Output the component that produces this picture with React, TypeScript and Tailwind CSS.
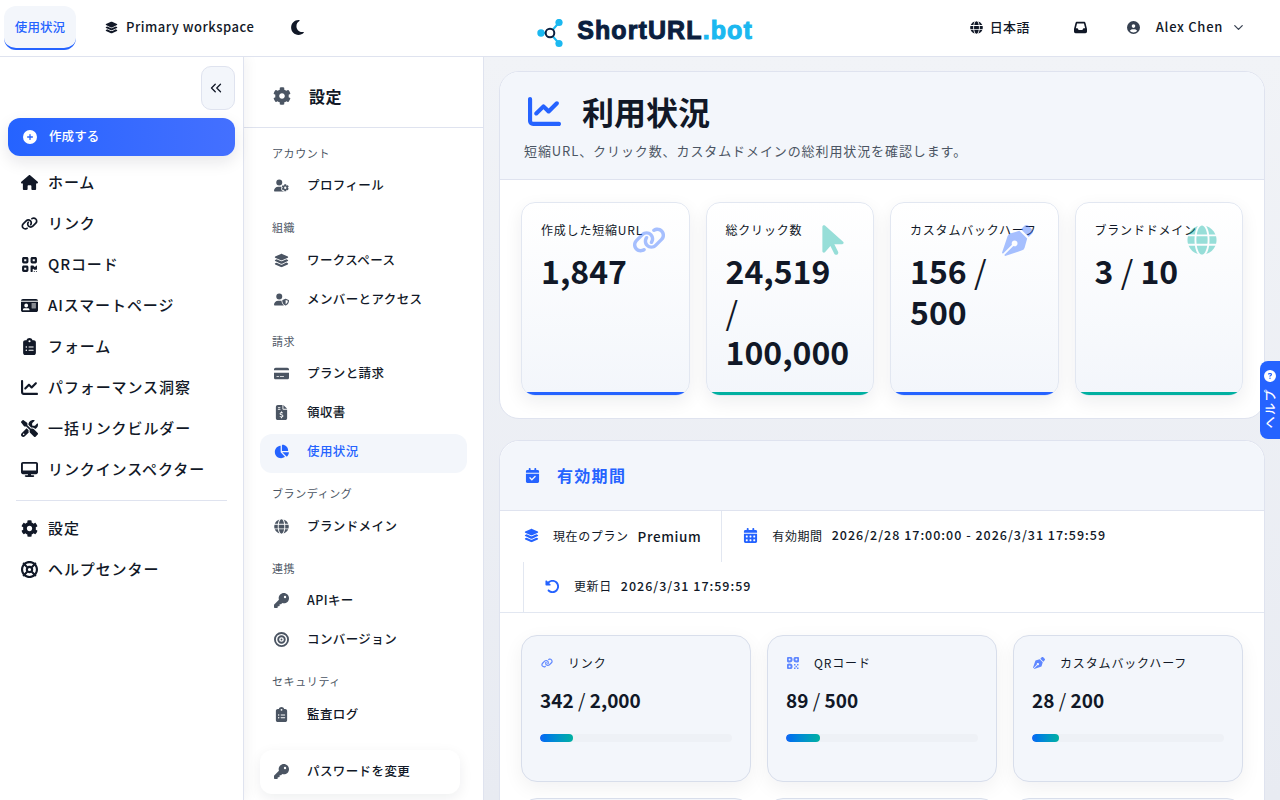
import type { ReactNode } from "react"
import { FaCog, FaGlobe, FaPenNib } from "react-icons/fa"
import {
  FaArrowPointer,
  FaCalendarCheck,
  FaCalendarDays,
  FaChartLine,
  FaChartPie,
  FaCircleQuestion,
  FaCirclePlus,
  FaCircleUser,
  FaClipboardList,
  FaCreditCard,
  FaDesktop,
  FaFileInvoiceDollar,
  FaHouse,
  FaIdCard,
  FaInbox,
  FaKey,
  FaLayerGroup,
  FaLifeRing,
  FaLink,
  FaMoon,
  FaBullseye,
  FaQrcode,
  FaRotateLeft,
  FaScrewdriverWrench,
  FaUserGear,
  FaUserShield,
} from "react-icons/fa6"
import { ChevronDown, ChevronsLeft } from "lucide-react"

const mainNav = [
  { label: "ホーム", icon: <FaHouse /> },
  { label: "リンク", icon: <FaLink /> },
  { label: "QRコード", icon: <FaQrcode /> },
  { label: "AIスマートページ", icon: <FaIdCard /> },
  { label: "フォーム", icon: <FaClipboardList /> },
  { label: "パフォーマンス洞察", icon: <FaChartLine /> },
  { label: "一括リンクビルダー", icon: <FaScrewdriverWrench /> },
  { label: "リンクインスペクター", icon: <FaDesktop /> },
]

const settingsNav = [
  { title: "アカウント", items: [{ label: "プロフィール", icon: <FaUserGear /> }] },
  {
    title: "組織",
    items: [
      { label: "ワークスペース", icon: <FaLayerGroup /> },
      { label: "メンバーとアクセス", icon: <FaUserShield /> },
    ],
  },
  {
    title: "請求",
    items: [
      { label: "プランと請求", icon: <FaCreditCard /> },
      { label: "領収書", icon: <FaFileInvoiceDollar /> },
      { label: "使用状況", icon: <FaChartPie />, active: true },
    ],
  },
  { title: "ブランディング", items: [{ label: "ブランドメイン", icon: <FaGlobe /> }] },
  {
    title: "連携",
    items: [
      { label: "APIキー", icon: <FaKey /> },
      { label: "コンバージョン", icon: <FaBullseye /> },
    ],
  },
  { title: "セキュリティ", items: [{ label: "監査ログ", icon: <FaClipboardList /> }] },
]

function QrDots() {
  return (
    <svg viewBox="0 0 12 12" className="w-3 h-3" fill="currentColor">
      <circle cx="2.6" cy="2.6" r="2" fill="none" stroke="currentColor" strokeWidth="2" />
      <circle cx="9.4" cy="2.6" r="2" fill="none" stroke="currentColor" strokeWidth="2" />
      <circle cx="2.6" cy="9.4" r="2" fill="none" stroke="currentColor" strokeWidth="2" />
      <rect x="7" y="7" width="1.5" height="1.5" />
      <rect x="10" y="7" width="1.5" height="1.5" />
      <rect x="8.5" y="8.8" width="1.5" height="1.5" />
      <rect x="7" y="10.5" width="1.5" height="1.5" />
      <rect x="10" y="10.5" width="1.5" height="1.5" />
    </svg>
  )
}

const stats = [
  { label: "作成した短縮URL", value: "1,847", icon: <FaLink className="text-[34px]" />, blue: true },
  { label: "総クリック数", value: "24,519 / 100,000", icon: <FaArrowPointer className="text-[34px]" />, blue: false },
  { label: "カスタムバックハーフ", value: "156 / 500", icon: <FaPenNib className="text-[31px]" />, blue: true },
  { label: "ブランドドメイン", value: "3 / 10", icon: <FaGlobe className="text-[30px]" />, blue: false },
]

const quotas: { label: string; value: string; pct: number; icon: ReactNode }[] = [
  { label: "リンク", value: "342 / 2,000", pct: 17.1, icon: <FaLink /> },
  { label: "QRコード", value: "89 / 500", pct: 17.8, icon: <QrDots /> },
  { label: "カスタムバックハーフ", value: "28 / 200", pct: 14, icon: <FaPenNib /> },
]

// the slash is much thinner than the digits around it
function Ratio({ value }: { value: string }) {
  const parts = value.split(" / ")
  if (parts.length === 1) return <>{value}</>
  return (
    <>
      {parts[0]} <span className="font-normal">/</span> {parts[1]}
    </>
  )
}

function Logo() {
  return (
    <div className="flex items-center gap-[10px] ml-[40px]">
      <svg viewBox="0 0 30 30" className="w-[30px] h-[30px] mt-[12px]">
        <path d="M13 14 L22 3.5 M13 14 L4 14 M13 14 L22 24.5" stroke="#1bb8f0" strokeWidth="2" />
        <circle cx="22" cy="3.5" r="3.6" fill="#1bb8f0" />
        <circle cx="4" cy="14" r="3.7" fill="#1bb8f0" />
        <circle cx="22" cy="24.5" r="3.6" fill="#1bb8f0" />
        <circle cx="13" cy="14" r="4.3" fill="#fff" stroke="#0b1f3f" strokeWidth="2" />
      </svg>
      <span className="mt-[6px] [font-family:'Liberation_Sans',sans-serif] text-[25px] font-bold tracking-[1.1px] text-[#0b1f3f] [-webkit-text-stroke:1px_currentColor]">
        ShortURL<span className="text-[#1bb8f0]">.bot</span>
      </span>
    </div>
  )
}

function Header() {
  return (
    <header className="h-[57px] shrink-0 flex items-center bg-white border-b border-[#dfe3ef] relative z-20">
      <div className="flex-1 flex items-center pl-1">
        <div className="w-[72px] h-[44px] flex items-center justify-center bg-[#f3f6fb] rounded-xl border-b-2 border-[#2563ff] text-[12.5px] tracking-[0.1px] font-medium text-[#2563ff]">
          使用状況
        </div>
        <div className="flex items-center gap-2 ml-[29px] pb-[2px] text-[13px] font-medium tracking-[0.5px] text-[#111827]">
          <FaLayerGroup className="text-[13px]" />
          Primary workspace
        </div>
        <FaMoon className="ml-[35px] mb-[2px] text-[17px] text-[#111827]" />
      </div>
      <Logo />
      <div className="flex-1 flex items-center justify-end pb-[2px] pr-[34px] text-[#111827]">
        <FaGlobe className="text-[13px]" />
        <span className="ml-[7px] text-[13px] font-medium tracking-[0.4px]">日本語</span>
        <FaInbox className="ml-[44px] text-[13px]" />
        <FaCircleUser className="ml-[40px] text-[13px] text-[#374151]" />
        <span className="ml-4 text-[13px] font-medium tracking-[0.7px]">Alex Chen</span>
        <ChevronDown className="ml-[8px] w-[15px] h-[15px] text-[#374151]" />
      </div>
    </header>
  )
}

function MainNavItem({ label, icon }: { label: string; icon: ReactNode }) {
  return (
    <div className="h-[41px] flex items-center pl-5 text-[15px] font-medium tracking-[0.9px] text-[#111827]">
      <span className="w-[18px] flex justify-center text-[17px] mr-[10px]">{icon}</span>
      {label}
    </div>
  )
}

function Sidebar() {
  return (
    <aside className="w-[244px] shrink-0 bg-white border-r border-[#dfe3ef] relative z-10 shadow-[3px_0_12px_rgba(17,24,39,0.05)] flex flex-col">
      <div className="flex justify-end pt-[9px] pr-2">
        <button className="w-[34px] h-[44px] flex items-center justify-center pr-1 bg-[#f3f6fb] border border-[#dfe3ef] rounded-[10px] text-[#111827]">
          <ChevronsLeft className="w-[18px] h-[18px]" strokeWidth={1.75} />
        </button>
      </div>
      <div className="mt-2 mx-2 h-[38px] w-[227px] flex items-center pl-[15px] pb-[1px] rounded-xl bg-gradient-to-r from-[#2563ff] to-[#4470ff] text-white text-[12.5px] font-medium tracking-[0.1px] shadow-[0_6px_16px_rgba(17,24,39,0.1)]">
        <FaCirclePlus className="text-[14px] mr-[12px]" />
        作成する
      </div>
      <nav className="mt-[6px]">
        {mainNav.map((item) => (
          <MainNavItem key={item.label} label={item.label} icon={item.icon} />
        ))}
      </nav>
      <div className="mx-4 mt-[10px] mb-[7px] h-px bg-[#dfe3ef]" />
      <MainNavItem label="設定" icon={<FaCog />} />
      <MainNavItem label="ヘルプセンター" icon={<FaLifeRing />} />
    </aside>
  )
}

function SettingsNav() {
  return (
    <aside className="w-[240px] shrink-0 bg-white border-r border-[#dfe3ef] flex flex-col">
      <div className="h-[71px] shrink-0 flex items-center pl-[29px] pt-2 border-b border-[#dfe3ef]">
        <FaCog className="text-[18px] text-[#4b5563] mr-[18px]" />
        <span className="text-[16px] font-semibold tracking-[0.4px] text-[#111827]">設定</span>
      </div>
      <div className="px-4 pt-[17px]">
        {settingsNav.map((group) => (
          <div key={group.title} className="mb-[13px]">
            <div className="h-4 mb-[6.5px] pl-3 flex items-center text-[11px] tracking-[0.6px] text-[#4b5563]">
              {group.title}
            </div>
            {group.items.map((item) => (
              <div
                key={item.label}
                className={
                  item.active
                    ? "h-[39px] flex items-center pl-[13px] pb-[3px] w-[207px] rounded-xl bg-[#f3f6fb] text-[#2563ff] text-[12.5px] font-medium tracking-[0.4px]"
                    : "h-[39px] flex items-center pl-[13px] pb-[3px] w-[207px] text-[#111827] text-[12.5px] font-medium tracking-[0.4px]"
                }
              >
                <span className={item.active ? "w-4 flex justify-center text-[15px] mr-[18px]" : "w-4 flex justify-center text-[15px] mr-[18px] text-[#4b5563]"}>
                  {item.icon}
                </span>
                {item.label}
              </div>
            ))}
          </div>
        ))}
        <div className="mt-[15px] w-[200px] h-[44px] flex items-center pl-[13px] pb-[2px] rounded-xl bg-white shadow-[0_4px_14px_rgba(17,24,39,0.07)] text-[#111827] text-[12.5px] font-medium tracking-[0.4px]">
          <span className="w-4 flex justify-center text-[15px] mr-[18px] text-[#4b5563]">
            <FaKey />
          </span>
          パスワードを変更
        </div>
      </div>
    </aside>
  )
}

function StatCard({ label, value, icon, blue }: { label: string; value: string; icon: ReactNode; blue: boolean }) {
  return (
    <div className="relative overflow-hidden h-[194px] rounded-[14px] border border-[#e2e7f1] bg-gradient-to-b from-white to-[#f3f6fb] pt-[18px] pl-[19px] pr-[40px] shadow-[0_6px_18px_rgba(17,24,39,0.07)]">
      <div className="text-[12px] tracking-[0.8px] text-[#111827] whitespace-nowrap">{label}</div>
      <div className="mt-[11px] text-[32px] leading-[40.5px] font-semibold text-[#111827]">
        <Ratio value={value} />
      </div>
      <div className={blue ? "absolute right-[20px] top-[21px] w-10 h-[32px] flex items-center justify-center text-[#2563ff] opacity-40" : "absolute right-[20px] top-[21px] w-10 h-[32px] flex items-center justify-center text-[#00b0a0] opacity-40"}>
        {icon}
      </div>
      <div className={blue ? "absolute left-0 right-0 bottom-0 h-[3px] bg-[#2563ff]" : "absolute left-0 right-0 bottom-0 h-[3px] bg-[#00b0a0]"} />
    </div>
  )
}

function QuotaCard({ label, value, pct, icon }: { label: string; value: string; pct: number; icon: ReactNode }) {
  return (
    <div className="h-[147px] rounded-2xl border border-[#d8deeb] bg-[#f3f6fb] pt-[18px] px-[18px] shadow-[0_6px_20px_rgba(17,24,39,0.06)]">
      <div className="flex items-center h-[18px] text-[12px] tracking-[0.85px] text-[#111827]">
        <span className="w-[14px] flex justify-center text-[12px] text-[#5f87ff] mr-[14px]">{icon}</span>
        {label}
      </div>
      <div className="mt-[14px] text-[19px] leading-7 font-semibold text-[#111827]">
        <Ratio value={value} />
      </div>
      <div className="mt-[20px] h-2 rounded-full bg-[#eef1f6] overflow-hidden">
        <div className="h-full rounded-full bg-gradient-to-r from-[#1565f5] to-[#00b0a0]" style={{ width: `${pct}%` }} />
      </div>
    </div>
  )
}

function Meta({ icon, label, value, className, valueClass }: { icon: ReactNode; label: string; value: string; className: string; valueClass: string }) {
  return (
    <div className={`h-[50.5px] flex items-center pb-[1px] ${className}`}>
      <span className="w-[16px] flex justify-center text-[15px] text-[#2563ff] mr-[14px]">{icon}</span>
      <span className="text-[12px] tracking-[0.6px] text-[#111827] mr-[9px]">{label}</span>
      <span className={valueClass}>{value}</span>
    </div>
  )
}

function Content() {
  return (
    <main className="flex-1 min-w-0 overflow-hidden bg-gradient-to-b from-[#f1f3f7] to-[#e8ebf2] pl-[15px] pr-[15px] pt-[14px]">
      <section className="rounded-[20px] border border-[#dfe3ef] bg-white overflow-hidden">
        <div className="h-[108px] bg-[#f3f6fb] border-b border-[#dfe3ef] pl-6 pt-[19px]">
          <div className="flex items-center gap-[21px] pl-[4px]">
            <FaChartLine className="text-[33px] text-[#2563ff]" />
            <h1 className="text-[32px] leading-10 font-bold text-[#111827]">利用状況</h1>
          </div>
          <p className="mt-[10px] text-[13px] tracking-[0.9px] text-[#4b5563]">
            短縮URL、クリック数、カスタムドメインの総利用状況を確認します。
          </p>
        </div>
        <div className="grid grid-cols-4 gap-4 px-[21px] pt-[22px] pb-[22px]">
          {stats.map((s) => (
            <StatCard key={s.label} {...s} />
          ))}
        </div>
      </section>

      <section className="mt-[21px] rounded-t-[20px] border border-[#dfe3ef] bg-white">
        <div className="h-[70px] rounded-t-[20px] bg-[#f3f6fb] border-b border-[#dfe3ef] flex items-center pl-[25px]">
          <FaCalendarCheck className="text-[15px] text-[#2563ff] mr-[17px]" />
          <h2 className="text-[16px] pb-[1px] font-semibold tracking-[1.3px] text-[#2563ff]">有効期間</h2>
        </div>
        <div className="flex flex-wrap px-[23px] border-b border-[#e2e7f1]">
          <Meta icon={<FaLayerGroup />} label="現在のプラン" value="Premium" className="pr-5 border-r border-[#e2e7f1]" valueClass="text-[13.5px] font-medium tracking-[0.6px] text-[#111827]" />
          <Meta icon={<FaCalendarDays />} label="有効期間" value="2026/2/28 17:00:00 - 2026/3/31 17:59:59" className="pl-5" valueClass="text-[12.5px] font-medium tracking-[1px] text-[#111827]" />
          <Meta icon={<FaRotateLeft />} label="更新日" value="2026/3/31 17:59:59" className="pl-5 border-l border-[#e2e7f1]" valueClass="text-[12.5px] font-medium tracking-[1px] text-[#111827]" />
        </div>
        <div className="grid grid-cols-3 gap-4 px-[21px] pt-[22px] pb-6">
          {quotas.map((q) => (
            <QuotaCard key={q.label} {...q} />
          ))}
          <div className="h-[147px] rounded-2xl border border-[#d8deeb] bg-[#f3f6fb]" />
          <div className="h-[147px] rounded-2xl border border-[#d8deeb] bg-[#f3f6fb]" />
          <div className="h-[147px] rounded-2xl border border-[#d8deeb] bg-[#f3f6fb]" />
        </div>
      </section>
    </main>
  )
}

export default function App() {
  return (
    <div className="relative h-screen overflow-hidden flex flex-col bg-white [font-family:'Noto_Sans_CJK_JP',sans-serif]">
      <Header />
      <div className="flex-1 min-h-0 flex">
        <Sidebar />
        <SettingsNav />
        <Content />
      </div>
      <div className="absolute right-0 top-[361px] w-5 h-[78px] rounded-l-lg bg-[#2563ff] text-white flex flex-col items-center pt-[9px] gap-[6px] z-30">
        <FaCircleQuestion className="text-[12px] shrink-0" />
        <span className="[writing-mode:vertical-rl] [text-orientation:sideways] rotate-180 text-[12px] font-medium leading-none tracking-[1.5px]">ヘルプ</span>
      </div>
    </div>
  )
}
